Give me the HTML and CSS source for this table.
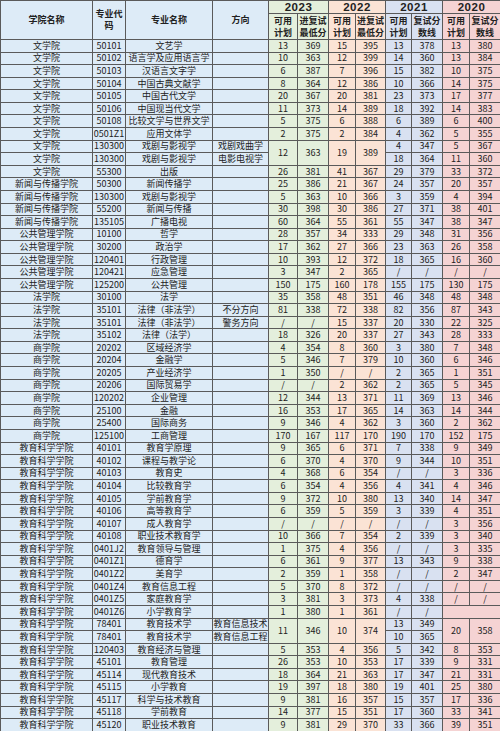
FILE: index.html
```html
<!DOCTYPE html>
<html lang="zh-CN">
<head>
<meta charset="utf-8">
<title>复试分数线</title>
<link rel="stylesheet" href="styles.css">
</head>
<body>
<table class="sheet">
<colgroup>
<col class="w1 cb"><col class="w2 cb"><col class="w3 cb"><col class="w4 cb">
<col class="w5 cg"><col class="w6 cg"><col class="w7 co"><col class="w8 co">
<col class="w9 cs"><col class="w10 cs"><col class="w11 cp"><col class="w12 cp">
</colgroup>
<thead>
<tr class="yr">
<th rowspan="2">学院名称</th><th rowspan="2">专业代<br>码</th><th rowspan="2">专业名称</th><th rowspan="2">方向</th>
<th colspan="2" class="year">2023</th><th colspan="2" class="year">2022</th><th colspan="2" class="year">2021</th><th colspan="2" class="year">2020</th>
</tr>
<tr class="sub">
<th>可用<br>计划</th><th>进复试<br>最低分</th><th>可用<br>计划</th><th>进复试<br>最低分</th><th>可用<br>计划</th><th>复试分<br>数线</th><th>可用<br>计划</th><th>复试分<br>数线</th>
</tr>
</thead>
<tbody>
<tr><td>文学院</td><td>50101</td><td>文艺学</td><td></td><td>13</td><td>369</td><td>15</td><td>395</td><td>13</td><td>378</td><td>13</td><td>380</td></tr>
<tr><td>文学院</td><td>50102</td><td>语言学及应用语言学</td><td></td><td>10</td><td>363</td><td>12</td><td>399</td><td>14</td><td>360</td><td>13</td><td>384</td></tr>
<tr><td>文学院</td><td>50103</td><td>汉语言文字学</td><td></td><td>6</td><td>387</td><td>7</td><td>396</td><td>15</td><td>382</td><td>10</td><td>375</td></tr>
<tr><td>文学院</td><td>50104</td><td>中国古典文献学</td><td></td><td>8</td><td>364</td><td>12</td><td>386</td><td>10</td><td>366</td><td>14</td><td>375</td></tr>
<tr><td>文学院</td><td>50105</td><td>中国古代文学</td><td></td><td>20</td><td>367</td><td>20</td><td>381</td><td>23</td><td>373</td><td>17</td><td>377</td></tr>
<tr><td>文学院</td><td>50106</td><td>中国现当代文学</td><td></td><td>11</td><td>373</td><td>14</td><td>389</td><td>18</td><td>392</td><td>14</td><td>383</td></tr>
<tr><td>文学院</td><td>50108</td><td>比较文学与世界文学</td><td></td><td>5</td><td>375</td><td>6</td><td>388</td><td>6</td><td>389</td><td>6</td><td>400</td></tr>
<tr><td>文学院</td><td>0501Z1</td><td>应用文体学</td><td></td><td>2</td><td>375</td><td>2</td><td>384</td><td>4</td><td>362</td><td>5</td><td>355</td></tr>
<tr><td>文学院</td><td>130300</td><td>戏剧与影视学</td><td>戏剧戏曲学</td><td rowspan="2">12</td><td rowspan="2">363</td><td rowspan="2">19</td><td rowspan="2">389</td><td>4</td><td>347</td><td>5</td><td>367</td></tr>
<tr><td>文学院</td><td>130300</td><td>戏剧与影视学</td><td>电影电视学</td><td>18</td><td>364</td><td>11</td><td>360</td></tr>
<tr><td>文学院</td><td>55300</td><td>出版</td><td></td><td>26</td><td>381</td><td>41</td><td>367</td><td>29</td><td>379</td><td>33</td><td>372</td></tr>
<tr><td>新闻与传播学院</td><td>50300</td><td>新闻传播学</td><td></td><td>25</td><td>386</td><td>21</td><td>367</td><td>24</td><td>357</td><td>20</td><td>357</td></tr>
<tr><td>新闻与传播学院</td><td>130300</td><td>戏剧与影视学</td><td></td><td>5</td><td>363</td><td>10</td><td>366</td><td>3</td><td>359</td><td>4</td><td>394</td></tr>
<tr><td>新闻与传播学院</td><td>55200</td><td>新闻与传播</td><td></td><td>30</td><td>398</td><td>30</td><td>386</td><td>27</td><td>371</td><td>38</td><td>401</td></tr>
<tr><td>新闻与传播学院</td><td>135105</td><td>广播电视</td><td></td><td>60</td><td>364</td><td>55</td><td>361</td><td>55</td><td>347</td><td>38</td><td>347</td></tr>
<tr><td>公共管理学院</td><td>10100</td><td>哲学</td><td></td><td>28</td><td>357</td><td>34</td><td>333</td><td>29</td><td>348</td><td>31</td><td>356</td></tr>
<tr><td>公共管理学院</td><td>30200</td><td>政治学</td><td></td><td>17</td><td>362</td><td>27</td><td>366</td><td>23</td><td>363</td><td>26</td><td>358</td></tr>
<tr><td>公共管理学院</td><td>120401</td><td>行政管理</td><td></td><td>10</td><td>393</td><td>12</td><td>372</td><td>18</td><td>365</td><td>16</td><td>360</td></tr>
<tr><td>公共管理学院</td><td>120421</td><td>应急管理</td><td></td><td>3</td><td>347</td><td>2</td><td>365</td><td>/</td><td>/</td><td>/</td><td>/</td></tr>
<tr><td>公共管理学院</td><td>125200</td><td>公共管理</td><td></td><td>150</td><td>175</td><td>160</td><td>178</td><td>155</td><td>175</td><td>130</td><td>175</td></tr>
<tr><td>法学院</td><td>30100</td><td>法学</td><td></td><td>35</td><td>358</td><td>48</td><td>351</td><td>46</td><td>348</td><td>48</td><td>348</td></tr>
<tr><td>法学院</td><td>35101</td><td>法律（非法学）</td><td>不分方向</td><td>81</td><td>338</td><td>72</td><td>338</td><td>82</td><td>356</td><td>87</td><td>343</td></tr>
<tr><td>法学院</td><td>35101</td><td>法律（非法学）</td><td>警务方向</td><td>/</td><td>/</td><td>15</td><td>337</td><td>20</td><td>330</td><td>22</td><td>325</td></tr>
<tr><td>法学院</td><td>35102</td><td>法律（法学）</td><td></td><td>18</td><td>326</td><td>20</td><td>337</td><td>27</td><td>343</td><td>28</td><td>333</td></tr>
<tr><td>商学院</td><td>20202</td><td>区域经济学</td><td></td><td>4</td><td>354</td><td>8</td><td>360</td><td>3</td><td>380</td><td>7</td><td>348</td></tr>
<tr><td>商学院</td><td>20204</td><td>金融学</td><td></td><td>5</td><td>346</td><td>7</td><td>379</td><td>10</td><td>360</td><td>6</td><td>346</td></tr>
<tr><td>商学院</td><td>20205</td><td>产业经济学</td><td></td><td>1</td><td>350</td><td>/</td><td>/</td><td>2</td><td>365</td><td>1</td><td>351</td></tr>
<tr><td>商学院</td><td>20206</td><td>国际贸易学</td><td></td><td>/</td><td>/</td><td>2</td><td>362</td><td>2</td><td>365</td><td>5</td><td>345</td></tr>
<tr><td>商学院</td><td>120202</td><td>企业管理</td><td></td><td>12</td><td>344</td><td>13</td><td>371</td><td>11</td><td>369</td><td>13</td><td>346</td></tr>
<tr><td>商学院</td><td>25100</td><td>金融</td><td></td><td>16</td><td>353</td><td>17</td><td>365</td><td>14</td><td>363</td><td>14</td><td>344</td></tr>
<tr><td>商学院</td><td>25400</td><td>国际商务</td><td></td><td>9</td><td>346</td><td>4</td><td>362</td><td>3</td><td>360</td><td>2</td><td>362</td></tr>
<tr><td>商学院</td><td>125100</td><td>工商管理</td><td></td><td>170</td><td>167</td><td>117</td><td>170</td><td>190</td><td>170</td><td>152</td><td>175</td></tr>
<tr><td>教育科学学院</td><td>40101</td><td>教育学原理</td><td></td><td>9</td><td>365</td><td>6</td><td>371</td><td>7</td><td>338</td><td>9</td><td>349</td></tr>
<tr><td>教育科学学院</td><td>40102</td><td>课程与教学论</td><td></td><td>6</td><td>370</td><td>4</td><td>370</td><td>9</td><td>344</td><td>10</td><td>351</td></tr>
<tr><td>教育科学学院</td><td>40103</td><td>教育史</td><td></td><td>4</td><td>368</td><td>6</td><td>354</td><td>/</td><td>/</td><td>3</td><td>336</td></tr>
<tr><td>教育科学学院</td><td>40104</td><td>比较教育学</td><td></td><td>6</td><td>354</td><td>4</td><td>356</td><td>4</td><td>341</td><td>4</td><td>346</td></tr>
<tr><td>教育科学学院</td><td>40105</td><td>学前教育学</td><td></td><td>9</td><td>372</td><td>10</td><td>380</td><td>13</td><td>340</td><td>14</td><td>347</td></tr>
<tr><td>教育科学学院</td><td>40106</td><td>高等教育学</td><td></td><td>6</td><td>359</td><td>5</td><td>359</td><td>3</td><td>339</td><td>4</td><td>351</td></tr>
<tr><td>教育科学学院</td><td>40107</td><td>成人教育学</td><td></td><td>/</td><td>/</td><td>/</td><td>/</td><td>/</td><td>/</td><td>3</td><td>356</td></tr>
<tr><td>教育科学学院</td><td>40108</td><td>职业技术教育学</td><td></td><td>10</td><td>366</td><td>7</td><td>354</td><td>2</td><td>339</td><td>3</td><td>340</td></tr>
<tr><td>教育科学学院</td><td>0401J2</td><td>教育领导与管理</td><td></td><td>1</td><td>375</td><td>4</td><td>356</td><td>/</td><td>/</td><td>3</td><td>335</td></tr>
<tr><td>教育科学学院</td><td>0401Z1</td><td>德育学</td><td></td><td>6</td><td>361</td><td>9</td><td>377</td><td>13</td><td>343</td><td>9</td><td>338</td></tr>
<tr><td>教育科学学院</td><td>0401Z2</td><td>美育学</td><td></td><td>2</td><td>359</td><td>1</td><td>358</td><td>/</td><td>/</td><td>2</td><td>347</td></tr>
<tr><td>教育科学学院</td><td>0401Z4</td><td>教育信息工程</td><td></td><td>5</td><td>370</td><td>8</td><td>372</td><td>/</td><td>/</td><td>/</td><td>/</td></tr>
<tr><td>教育科学学院</td><td>0401Z5</td><td>家庭教育学</td><td></td><td>3</td><td>381</td><td>3</td><td>373</td><td>4</td><td>338</td><td>/</td><td>/</td></tr>
<tr><td>教育科学学院</td><td>0401Z6</td><td>小学教育学</td><td></td><td>1</td><td>380</td><td>1</td><td>361</td><td>/</td><td>/</td><td colspan="2"></td></tr>
<tr><td>教育科学学院</td><td>78401</td><td>教育技术学</td><td>教育信息技术</td><td rowspan="2">11</td><td rowspan="2">346</td><td rowspan="2">10</td><td rowspan="2">374</td><td>13</td><td>349</td><td rowspan="2">20</td><td rowspan="2">358</td></tr>
<tr><td>教育科学学院</td><td>78401</td><td>教育技术学</td><td>教育信息工程</td><td>10</td><td>365</td></tr>
<tr><td>教育科学学院</td><td>120403</td><td>教育经济与管理</td><td></td><td>5</td><td>353</td><td>4</td><td>356</td><td>5</td><td>342</td><td>8</td><td>353</td></tr>
<tr><td>教育科学学院</td><td>45101</td><td>教育管理</td><td></td><td>26</td><td>353</td><td>10</td><td>353</td><td>17</td><td>339</td><td>9</td><td>331</td></tr>
<tr><td>教育科学学院</td><td>45114</td><td>现代教育技术</td><td></td><td>18</td><td>364</td><td>21</td><td>363</td><td>17</td><td>347</td><td>21</td><td>331</td></tr>
<tr><td>教育科学学院</td><td>45115</td><td>小学教育</td><td></td><td>19</td><td>397</td><td>18</td><td>380</td><td>19</td><td>401</td><td>25</td><td>380</td></tr>
<tr><td>教育科学学院</td><td>45117</td><td>科学与技术教育</td><td></td><td>9</td><td>381</td><td>16</td><td>357</td><td>15</td><td>357</td><td>17</td><td>336</td></tr>
<tr><td>教育科学学院</td><td>45118</td><td>学前教育</td><td></td><td>14</td><td>377</td><td>15</td><td>351</td><td>17</td><td>360</td><td>33</td><td>341</td></tr>
<tr><td>教育科学学院</td><td>45120</td><td>职业技术教育</td><td></td><td>9</td><td>381</td><td>29</td><td>370</td><td>33</td><td>366</td><td>39</td><td>351</td></tr>
</tbody>
</table>
</body>
</html>
```
FILE: styles.css
```css
html, body {
  margin: 0;
  padding: 0;
  background: #ffffff;
}
.sheet {
  width: 500px;
  border-collapse: collapse;
  table-layout: fixed;
  font-family: "Noto Sans CJK SC", "Noto Sans", sans-serif;
  font-size: 9px;
  color: #222222;
}
.w1 { width: 92px; }
.w2 { width: 33px; }
.w3 { width: 87px; }
.w4 { width: 56px; }
.w5 { width: 29px; }
.w6 { width: 31px; }
.w7 { width: 27px; }
.w8 { width: 30px; }
.w9 { width: 26px; }
.w10 { width: 31px; }
.w11 { width: 27px; }
.w12 { width: 31px; }
.cb { background: #ddebf7; }
.cg { background: #e4efdc; }
.co { background: #fbe3d5; }
.cs { background: #d9e1f1; }
.cp { background: #f5d3d3; }
.sheet th,
.sheet td {
  border: 1px solid #5a5a5a;
  padding: 0;
  text-align: center;
  vertical-align: middle;
  overflow: hidden;
  white-space: nowrap;
}
.sheet td {
  line-height: 10px;
  height: 11.58px;
}
.sheet th {
  font-weight: bold;
  line-height: 12px;
}
.yr th.year {
  height: 11px;
}
.sub th {
  height: 25px;
}
.year {
  font-family: "Liberation Sans", sans-serif;
  font-size: 11.5px;
  letter-spacing: 0.5px;
  line-height: 10px;
}
```
